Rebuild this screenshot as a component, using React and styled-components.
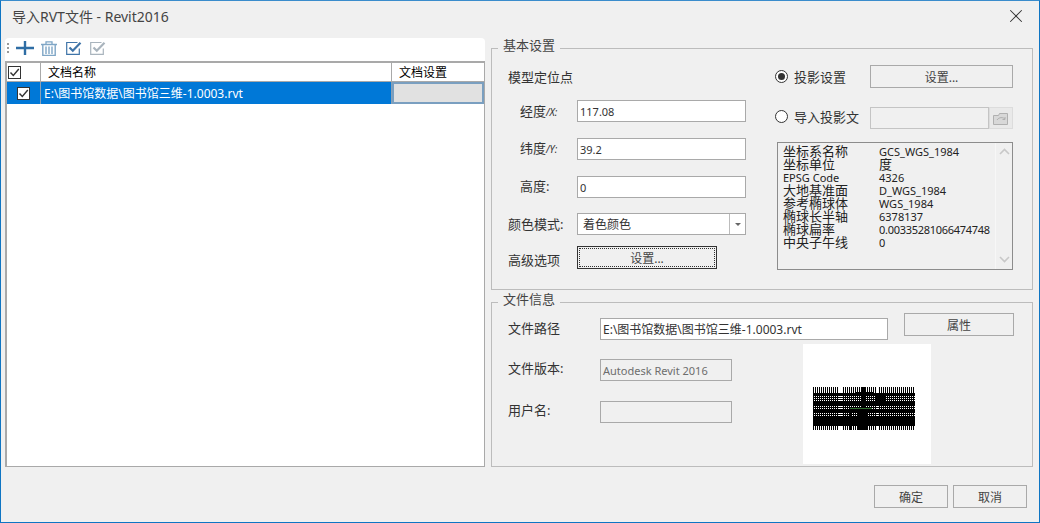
import React from "react";
import styled, { createGlobalStyle } from "styled-components";
import { X } from "lucide-react";

const Global = createGlobalStyle`
  html, body { margin: 0; padding: 0; background: #f0f0f0; }
  * { box-sizing: border-box; }
`;

const Window = styled.div`
  width: 1040px;
  height: 523px;
  background: #f0f0f0;
  border: 1px solid #0f75c3;
  border-top-color: #3a8ccc;
  font-family: "Noto Sans", "Noto Sans CJK SC", sans-serif;
  font-size: 12px;
  color: #333;
  display: flex;
  flex-direction: column;
  overflow: hidden;
`;

const TitleBar = styled.div`
  height: 36px;
  flex: none;
  padding: 0 12px 6px 11px;
  display: flex;
  align-items: center;
  justify-content: space-between;
  font-size: 14px;
  color: #444;
`;

const Body = styled.div`
  height: 430px;
  flex: none;
  padding: 1px 6px 0 4px;
  display: flex;
  gap: 6px;
`;

const LeftPanel = styled.div`
  width: 480px;
  flex: none;
  display: flex;
  flex-direction: column;
`;

const Toolbar = styled.div`
  height: 23px;
  flex: none;
  background: #fff;
  border-radius: 4px 4px 0 0;
  padding: 0 0 3px 2px;
  display: flex;
  align-items: center;
  gap: 8px;
`;

const Grip = styled.span`
  width: 2px;
  height: 10px;
  margin-right: -1px;
  background: repeating-linear-gradient(#999 0 2px, transparent 2px 4px);
`;

const Table = styled.div`
  flex: 1;
  background: #fff;
  border: 2px solid #a9a9a9;
  border-bottom-width: 1px;
  border-right-width: 1px;
`;

const Row = styled.div`
  height: ${(p) => (p.$head ? "19px" : "22px")};
  display: grid;
  grid-template-columns: 34px 351px 1fr;
  background: ${(p) => (p.$head ? "#fff" : "#0078d7")};
  border-bottom: ${(p) => (p.$head ? "1px solid #a9a9a9" : "none")};
`;

const Cell = styled.div`
  display: flex;
  align-items: center;
  padding-left: ${(p) => p.$pad || 0}px;
  border-right: 1px solid ${(p) => (p.$head ? "#a9a9a9" : "#8aa0b5")};
  color: ${(p) => (p.$head ? "#000" : "#fff")};
  white-space: nowrap;
  &:last-child { border-right: none; }
`;

const Check = styled.span`
  width: 13px;
  height: 13px;
  background: #fff;
  border: 1px solid #333;
  display: flex;
  margin-left: ${(p) => p.$left}px;
`;

const EditCell = styled.div`
  background: #e1e1e1;
  border: 2px solid #7a9fc0;
`;

const RightPanel = styled.div`
  flex: 1;
  display: flex;
  flex-direction: column;
  gap: 2px;
`;

const Group = styled.fieldset`
  margin: 0;
  padding: 0;
  height: ${(p) => p.$h}px;
  flex: none;
  border: 1px solid #bcbcbc;
  min-inline-size: 0;
`;

const Legend = styled.legend`
  margin-left: 6px;
  padding: 0 5px 6px;
  font-size: 13px;
  line-height: 15px;
  color: #444;
`;

const SettingsBody = styled.div`
  padding: 6px 19px 0 16px;
  display: flex;
  justify-content: space-between;
`;

const Column = styled.div`
  width: ${(p) => p.$w}px;
  display: flex;
  flex-direction: column;
`;

const Heading = styled.div`
  height: 22px;
  margin-bottom: 13px;
  display: flex;
  align-items: center;
  font-size: 13px;
`;

const Field = styled.div`
  height: ${(p) => p.$h || 22}px;
  margin-bottom: ${(p) => p.$gap ?? 16}px;
  display: grid;
  grid-template-columns: ${(p) => p.$label || 69}px 1fr;
  align-items: center;
`;

const Label = styled.span`
  padding-left: ${(p) => p.$indent || 0}px;
  margin-top: ${(p) => (p.$shift || 0) * 2}px;
  font-size: 13px;
  white-space: nowrap;
  em { font-size: 10px; }
`;

const Input = styled.div`
  height: 22px;
  width: ${(p) => p.$w || "100%"};
  border: 1px solid #a9a9a9;
  background: ${(p) => (p.$off ? "#f0f0f0" : "#fff")};
  color: ${(p) => (p.$off ? "#6d6d6d" : "#333")};
  padding-left: 2px;
  display: flex;
  align-items: center;
  white-space: nowrap;
  overflow: hidden;
  font-size: ${(p) => p.$size || 11}px;
`;

const Combo = styled(Input)`
  padding: 0 0 0 5px;
  justify-content: space-between;
  font-size: 12px;
`;

const ComboArrow = styled.span`
  width: 16px;
  height: 100%;
  border-left: 1px solid #bcbcbc;
  display: flex;
  align-items: center;
  justify-content: center;
  &::after {
    content: "";
    border: 3px solid transparent;
    border-top: 3px solid #666;
    margin-top: 3px;
  }
`;

const Button = styled.button`
  height: 23px;
  width: ${(p) => p.$w || "100%"};
  flex: none;
  padding: 0;
  background: #f0f0f0;
  border: 1px solid #a9a9a9;
  font: inherit;
  color: #444;
`;

const FocusButton = styled(Button)`
  border: 1px solid #333;
  outline: 1px dotted #333;
  outline-offset: -3px;
`;

const RadioRow = styled.div`
  height: ${(p) => p.$h}px;
  margin-bottom: ${(p) => p.$gap}px;
  display: flex;
  align-items: center;
  justify-content: space-between;
`;

const RadioLabel = styled.label`
  display: flex;
  align-items: center;
  gap: 6px;
  margin-top: ${(p) => (p.$up ? "-3px" : "0")};
  font-size: 13px;
  white-space: nowrap;
`;

const Radio = styled.span`
  width: 13px;
  height: 13px;
  flex: none;
  border-radius: 50%;
  border: 1px solid #333;
  background: #fff;
  display: flex;
  align-items: center;
  justify-content: center;
  &::after {
    content: "";
    width: 7px;
    height: 7px;
    border-radius: 50%;
    background: ${(p) => (p.$on ? "#333" : "transparent")};
  }
`;

const PickerWrap = styled.div`
  display: flex;
`;

const PickerInput = styled(Input)`
  width: 119px;
  border-color: #c4c4c4;
`;

const PickerButton = styled.span`
  width: 24px;
  height: 22px;
  background: #e9e9e9;
  border: 1px solid #dcdcdc;
  display: flex;
  align-items: center;
  justify-content: center;
`;

const InfoBox = styled.div`
  height: 128px;
  margin-left: 2px;
  border: 1px solid #8c8c8c;
  display: grid;
  grid-template-columns: 1fr 17px;
`;

const InfoList = styled.div`
  padding: 2px 0 0 5px;
  display: grid;
  grid-template-columns: 96px 1fr;
  grid-auto-rows: 13px;
  line-height: 13px;
  color: #222;
  white-space: nowrap;
`;

const InfoName = styled.span`
  font-size: ${(p) => (p.$latin ? 11 : 13)}px;
`;

const InfoValue = styled.span`
  font-size: ${(p) => (p.$cjk ? 13 : 11)}px;
  letter-spacing: ${(p) => (p.$tight ? "-0.28px" : "0")};
`;

const InfoScroll = styled.div`
  background: #f0f0f0;
  border-left: 1px solid #f7f7f7;
  display: flex;
  flex-direction: column;
  justify-content: space-between;
  align-items: center;
  padding: 5px 0 6px;
`;

const FileBody = styled.div`
  padding: 0 18px 0 16px;
  display: grid;
  grid-template-columns: 380px 1fr;
  column-gap: 16px;
`;

const FileColumn = styled.div`
  padding-top: 5px;
  display: flex;
  flex-direction: column;
`;

const FileRight = styled.div`
  display: flex;
  flex-direction: column;
`;

const Preview = styled.div`
  width: 128px;
  height: 120px;
  margin: 8px 0 0 -101px;
  padding: 43px 0 0 10px;
  background: #fff;
`;

const Footer = styled.div`
  flex: 1;
  padding: 18px 12px 0 0;
  display: flex;
  justify-content: flex-end;
  gap: 5px;
`;

const Tick = ({ color = "#333", w = 11 }) => (
  <svg width={w} height={w} viewBox="0 0 11 11" fill="none">
    <path d="M1.5 5.5 4.3 8.5 9.8 2" stroke={color} strokeWidth="1.4" />
  </svg>
);

const ToolCheck = ({ color }) => (
  <svg width="16" height="14" viewBox="0 0 16 14" fill="none">
    <path d="M11.5 1.5H.7v11.8h12.6V7.5" stroke={color} strokeWidth="1.2" />
    <path d="M3.5 6.5 6.8 9.8 14.5 1.8" stroke={color} strokeWidth="2.2" />
  </svg>
);

const PlusIcon = () => (
  <svg width="18" height="14" viewBox="0 0 18 14" style={{ marginRight: -1 }}>
    <path d="M0 7h18M9 0v14" stroke="#2e6da4" strokeWidth="2.4" />
  </svg>
);

const TrashIcon = () => (
  <svg width="16" height="15" viewBox="0 0 16 15" fill="none" stroke="#7fa6c6" style={{ marginRight: 1 }}>
    <path d="M0 3.5h16M5 3V.8h6V3" strokeWidth="1.3" />
    <path d="M1.8 4v10.5h12.4V4M5 5.5V13M8 5.5V13M11 5.5V13" strokeWidth="1.4" />
  </svg>
);

const FolderIcon = () => (
  <svg width="16" height="13" viewBox="0 0 16 13" fill="none" stroke="#b0b0b0">
    <path d="M.5 12.5V3.5h5l1-2h8v11z" fill="#d8d8d8" />
    <path d="M4 8c2-3 6-3 8-1M12 5v2.5H9.5" strokeWidth="1" />
  </svg>
);

const Chevron = ({ d }) => (
  <svg width="11" height="7" viewBox="0 0 11 7" fill="none">
    <path d={d} stroke="#c8c8c8" strokeWidth="1.6" />
  </svg>
);

// rough stand-in for the dense black preview thumbnail
const ticks = Array.from({ length: 51 }, (_, i) => i * 2);
const bands = [[6, 3], [15, 4], [23, 3], [31, 8]];
const thinLines = [10, 12, 14, 20, 22, 27, 29, 30];
const gaps = [26, 27, 28, 63, 64, 65];
const blocks = [
  [42, 5, 18, 2],
  [37, 7, 26, 2],
  [48, 0, 4, 43],
  [62, 7, 10, 9],
  [36, 26, 3, 17],
  [45, 26, 3, 17],
  [52, 26, 3, 17],
];

const PreviewDrawing = () => (
  <svg width="102" height="43" viewBox="0 0 102 43" shapeRendering="crispEdges" display="block">
    {ticks.map((x) => (
      <rect key={x} x={x} y="0" width="1" height="43" fill="#000" />
    ))}
    {gaps.map((x) => (
      <rect key={x} x={x} y="0" width="1" height="43" fill="#fff" />
    ))}
    {bands.map(([y, h]) => (
      <rect key={y} x="0" y={y} width="102" height={h} fill="#000" />
    ))}
    {thinLines.map((y) => (
      <rect key={y} x="0" y={y} width="102" height="1" fill="#000" />
    ))}
    {blocks.map(([x, y, w, h]) => (
      <rect key={`${x}-${y}`} x={x} y={y} width={w} height={h} fill="#000" />
    ))}
    <rect x="37" y="21" width="22" height="1" fill="#2f6d2f" />
  </svg>
);

const infoRows = [
  ["坐标系名称", "GCS_WGS_1984"],
  ["坐标单位", "度"],
  ["EPSG Code", "4326"],
  ["大地基准面", "D_WGS_1984"],
  ["参考椭球体", "WGS_1984"],
  ["椭球长半轴", "6378137"],
  ["椭球扁率", "0.00335281066474748"],
  ["中央子午线", "0"],
];

const filePath = "E:\\图书馆数据\\图书馆三维-1.0003.rvt";

export default function App() {
  return (
    <>
      <Global />
      <Window>
        <TitleBar>
          <span>导入RVT文件 - Revit2016</span>
          <X size={22} strokeWidth={1.1} color="#333" />
        </TitleBar>
        <Body>
          <LeftPanel>
            <Toolbar>
              <Grip />
              <PlusIcon />
              <TrashIcon />
              <ToolCheck color="#3f74a8" />
              <ToolCheck color="#a9b4bd" />
            </Toolbar>
            <Table>
              <Row $head>
                <Cell $head>
                  <Check $left={1}><Tick /></Check>
                </Cell>
                <Cell $head $pad={7}>文档名称</Cell>
                <Cell $head $pad={7}>文档设置</Cell>
              </Row>
              <Row>
                <Cell>
                  <Check $left={10}><Tick /></Check>
                </Cell>
                <Cell $pad={3}>{filePath}</Cell>
                <EditCell />
              </Row>
            </Table>
          </LeftPanel>
          <RightPanel>
            <Group $h={252}>
              <Legend>基本设置</Legend>
              <SettingsBody>
                <Column $w={238}>
                  <Heading>模型定位点</Heading>
                  <Field>
                    <Label $indent={12} $shift={-1}>经度<em>/X:</em></Label>
                    <Input>117.08</Input>
                  </Field>
                  <Field>
                    <Label $indent={12} $shift={-2}>纬度<em>/Y:</em></Label>
                    <Input>39.2</Input>
                  </Field>
                  <Field $gap={15}>
                    <Label $indent={12} $shift={-2}>高度:</Label>
                    <Input>0</Input>
                  </Field>
                  <Field $gap={11}>
                    <Label $shift={-1}>颜色模式:</Label>
                    <Combo>
                      着色颜色
                      <ComboArrow />
                    </Combo>
                  </Field>
                  <Field $gap={0} $h={23}>
                    <Label $shift={2}>高级选项</Label>
                    <FocusButton $w="140px">设置...</FocusButton>
                  </Field>
                </Column>
                <Column $w={238}>
                  <RadioRow $h={23} $gap={19}>
                    <RadioLabel>
                      <Radio $on />
                      投影设置
                    </RadioLabel>
                    <Button $w="143px">设置...</Button>
                  </RadioRow>
                  <RadioRow $h={22} $gap={13}>
                    <RadioLabel $up>
                      <Radio />
                      导入投影文
                    </RadioLabel>
                    <PickerWrap>
                      <PickerInput $off />
                      <PickerButton>
                        <FolderIcon />
                      </PickerButton>
                    </PickerWrap>
                  </RadioRow>
                  <InfoBox>
                    <InfoList>
                      {infoRows.map(([name, value]) => (
                        <React.Fragment key={name}>
                          <InfoName $latin={name === "EPSG Code"}>{name}</InfoName>
                          <InfoValue $cjk={value === "度"} $tight={value.length > 15}>{value}</InfoValue>
                        </React.Fragment>
                      ))}
                    </InfoList>
                    <InfoScroll>
                      <Chevron d="M1 6 5.5 1.5 10 6" />
                      <Chevron d="M1 1 5.5 5.5 10 1" />
                    </InfoScroll>
                  </InfoBox>
                </Column>
              </SettingsBody>
            </Group>
            <Group $h={175}>
              <Legend>文件信息</Legend>
              <FileBody>
                <FileColumn>
                  <Field $gap={19} $label={92}>
                    <Label $shift={-2}>文件路径</Label>
                    <Input $size={12}>{filePath}</Input>
                  </Field>
                  <Field $gap={20} $label={92}>
                    <Label $shift={-3}>文件版本:</Label>
                    <Input $off $w="132px">Autodesk Revit 2016</Input>
                  </Field>
                  <Field $gap={0} $label={92}>
                    <Label $shift={-3}>用户名:</Label>
                    <Input $off $w="132px" />
                  </Field>
                </FileColumn>
                <FileRight>
                  <Button $w="110px">属性</Button>
                  <Preview>
                    <PreviewDrawing />
                  </Preview>
                </FileRight>
              </FileBody>
            </Group>
          </RightPanel>
        </Body>
        <Footer>
          <Button $w="74px">确定</Button>
          <Button $w="74px">取消</Button>
        </Footer>
      </Window>
    </>
  );
}
